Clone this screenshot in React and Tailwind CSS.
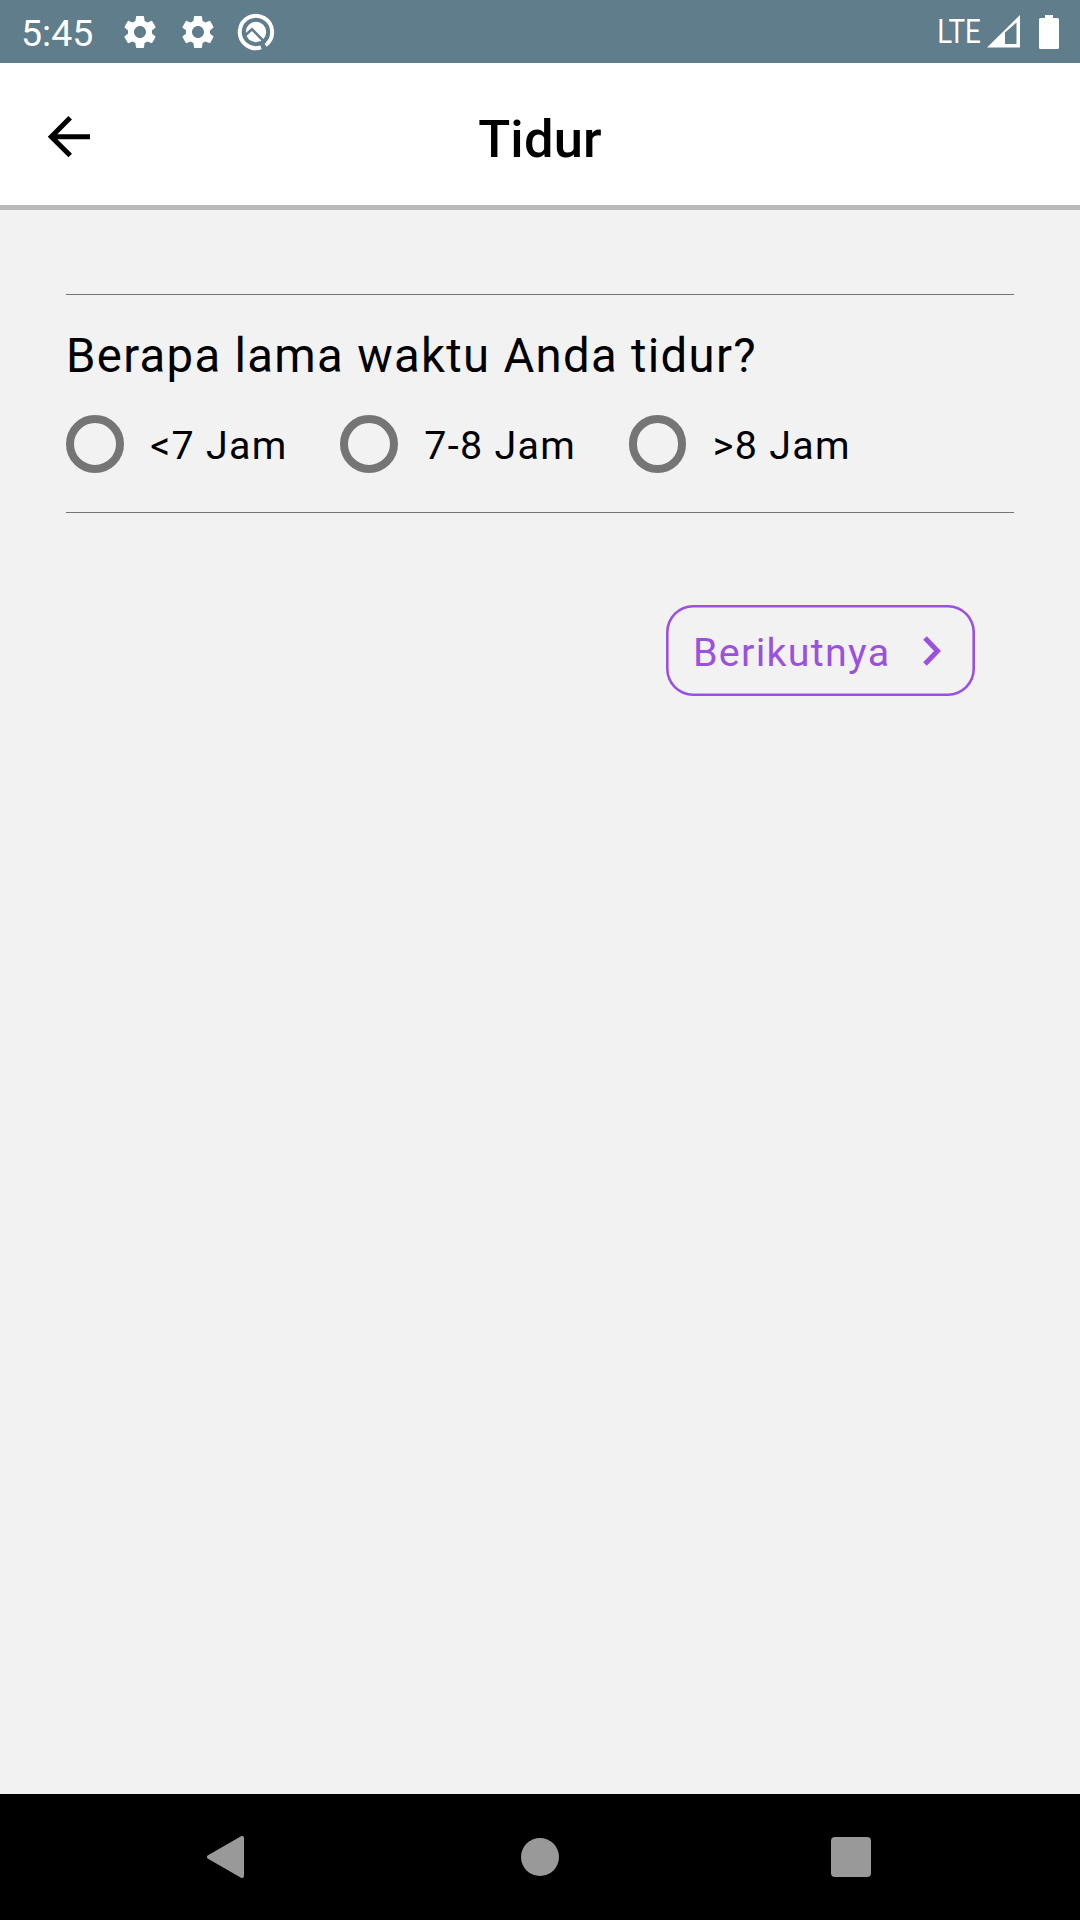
import { MdSettings } from "react-icons/md";

const options = ["<7 Jam", "7-8 Jam", ">8 Jam"];

function StatusBar() {
  return (
    <div className="flex h-[63px] items-center bg-[#607d8b] pl-[21px] pr-[21px] text-white">
      <span className="w-[99px] pt-[2px] text-[37.500px] leading-[44px]">5:45</span>
      <MdSettings className="size-10" />
      <MdSettings className="ml-[18px] size-10" />
      <svg className="ml-[19px] size-[38px]" viewBox="-19 -19 38 38" fill="none">
        <path d="M5 15.400A16.200 16.200 0 1 1 9.500 13.100" stroke="#fff" strokeWidth="4" />
        <circle r="10.200" fill="#fff" />
        <path d="M-11 3.500-4-2.800 9.500 11" stroke="#607d8b" strokeWidth="2.600" />
      </svg>
      <span className="ml-auto origin-right scale-x-[0.840] text-[33px] leading-10">LTE</span>
      <svg className="ml-[6px] size-[33px]" viewBox="0 0 33 33">
        <path fillRule="evenodd" fill="#fff" d="M0 32.5 33 0V32.5ZM18 17.5V29H29.5V7.5Z" />
      </svg>
      <svg className="ml-[19px] h-[34px] w-5" viewBox="0 0 20 34">
        <path fill="#fff" d="M6 0h8v3h4.500a1.500 1.500 0 0 1 1.500 1.500v28a1.500 1.500 0 0 1-1.500 1.500h-17a1.500 1.500 0 0 1-1.500-1.500v-28a1.500 1.500 0 0 1 1.500-1.500h4.500z" />
      </svg>
    </div>
  );
}

function Header() {
  return (
    <header className="grid h-[147px] grid-cols-[1fr_auto_1fr] items-center border-b-[5px] border-[#b9b9b9] bg-white">
      <button className="ml-12 mt-[5px] size-[42px]" aria-label="Kembali">
        <svg viewBox="0 0 42 42" fill="none" stroke="#000" strokeWidth="5">
          <path d="M22.200 1.800 3.300 20.700 22.200 39.600M3.500 20.700H42" />
        </svg>
      </button>
      <h1 className="pt-[9px] text-[52.500px] font-medium leading-[62px] tracking-[0.200px]">Tidur</h1>
    </header>
  );
}

function NavigationBar() {
  return (
    <nav className="flex h-[126px] items-center bg-black pl-[207px] pr-[209px]">
      <svg className="h-[42px] w-[37px]" viewBox="0 0 37 42">
        <path d="M35 2V40L2 21Z" fill="#999" stroke="#999" strokeWidth="4" strokeLinejoin="round" />
      </svg>
      <div className="ml-[277px] size-[38px] rounded-full bg-[#999]" />
      <div className="ml-auto size-10 rounded-[4px] bg-[#999]" />
    </nav>
  );
}

export default function App() {
  return (
    <div className="flex h-[1920px] w-[1080px] flex-col overflow-hidden bg-[#f2f2f2] font-['Roboto',sans-serif] text-black">
      <StatusBar />
      <Header />
      <main className="flex flex-1 flex-col px-[66px] pt-[84px]">
        <section className="flex h-[219px] flex-col border-y border-[#757575] pt-[33px]">
          <h2 className="text-[47.250px] leading-[56px] tracking-[1.320px]">Berapa lama waktu Anda tidur?</h2>
          <div className="mt-[31px] flex h-[58px] items-center gap-[52.500px]">
            {options.map((label) => (
              <label key={label} className="flex items-center gap-[26.700px]">
                <span className="h-[58px] w-[57.500px] rounded-full border-8 border-[#757575]" />
                <span className="pt-[3px] text-[39.400px] leading-[46px] tracking-[1.300px]">{label}</span>
              </label>
            ))}
          </div>
        </section>
        <button className="mr-[39px] mt-[92px] flex h-[91px] w-[309px] items-center self-end rounded-[27px] pl-[27px] text-[#9b51e0] shadow-[inset_0_0_0_2.600px_#9b51e0]">
          <span className="pt-[5px] text-[39.400px] leading-[46px] tracking-[1.300px]">Berikutnya</span>
          <svg className="ml-auto mr-[34px] h-[30px] w-[18px]" viewBox="0 0 18 30" fill="none" stroke="#9b51e0" strokeWidth="5">
            <path d="M2 2 14.500 15 2 28" />
          </svg>
        </button>
      </main>
      <NavigationBar />
    </div>
  );
}
